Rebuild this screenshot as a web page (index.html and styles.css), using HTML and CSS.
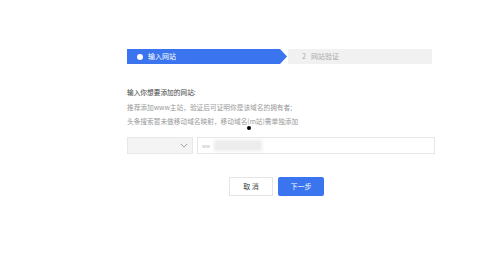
FILE: index.html
```html
<!DOCTYPE html>
<html lang="zh-CN">
<head>
    <meta charset="UTF-8">
    <meta name="viewport" content="width=device-width, initial-scale=1.0">
    <title>添加网站</title>
    <link rel="stylesheet" href="styles.css">
</head>

<body>
    <div class="wrap">
        <!-- steps -->
        <div class="steps">
            <div class="step active">
                <span class="step-num"></span>
                <span>输入网站</span>
            </div>
            <div class="step next">
                <span class="step-idx">2</span>
                <span>网站验证</span>
            </div>
        </div>

        <div class="intro">
            <p class="title">输入你想要添加的网站:</p>
            <p>推荐添加www主站，验证后可证明你是该域名的拥有者;</p>
            <p>头条搜索暂未做移动域名映射，移动域名(m站)需单独添加</p>
        </div>

        <div class="form-row">
            <div class="select">
                <svg class="chevron" viewBox="0 0 10 6" width="8" height="5">
                    <path d="M1 1l4 4 4-4" fill="none" stroke="#9a9a9a" stroke-width="1.2"/>
                </svg>
            </div>
            <div class="input">
                <span class="prefix">ww</span>
                <span class="blurred"></span>
            </div>
        </div>

        <div class="actions">
            <a href="#" class="btn btn-cancel">取 消</a>
            <a href="#" class="btn btn-primary">下一步</a>
        </div>
    </div>

    <div class="cursor-dot"></div>
</body>

</html>
```

FILE: styles.css
```css
body {
    background-color: #fff;
    color: #333;
    font-family: "Noto Sans CJK SC", "Noto Sans", sans-serif;
    margin: 0;
    width: 499px;
    height: 265px;
    overflow: hidden;
}

.wrap {
    padding: 49px 0 0 127px;
    width: 308px;
}

/* steps bar */
.steps {
    display: flex;
    width: 305px;
    height: 15px;
    font-size: 7px;
    line-height: 15px;
}

.step {
    display: flex;
    align-items: center;
}

.step.active {
    width: 160px;
    background: #3a74ee;
    color: #fff;
    clip-path: polygon(0 0, 153px 0, 160px 50%, 153px 100%, 0 100%);
    padding-left: 10px;
    box-sizing: border-box;
}

.step-num {
    width: 6px;
    height: 6px;
    border-radius: 50%;
    background: #fff;
    margin-right: 5px;
}

.step.next {
    flex: 1;
    background: #f1f1f1;
    color: #aaa;
    margin-left: 1px;
    padding-left: 14px;
}

.step-idx {
    margin-right: 5px;
}

/* intro */
.intro {
    margin-top: 21px;
    font-size: 6.7px;
    line-height: 14.5px;
    color: #999;
}

.intro p {
    margin: 0;
}

.intro .title {
    color: #444;
}

/* form */
.form-row {
    display: flex;
    gap: 4px;
    margin-top: 8px;
    height: 17px;
}

.select {
    width: 66px;
    background: #f4f4f4;
    border: 1px solid #e8e8e8;
    box-sizing: border-box;
    display: flex;
    align-items: center;
    justify-content: flex-end;
    padding-right: 4px;
}

.input {
    flex: 1;
    border: 1px solid #e6e6e6;
    box-sizing: border-box;
    display: flex;
    align-items: center;
    padding-left: 4px;
    font-size: 5px;
    color: #bbb;
}

.blurred {
    width: 48px;
    height: 11px;
    margin-left: 4px;
    background: #ececec;
    filter: blur(1.5px);
}

/* buttons */
.actions {
    display: flex;
    gap: 5px;
    margin: 23px 0 0 102px;
}

.btn {
    height: 19px;
    line-height: 19px;
    font-size: 7px;
    text-align: center;
    text-decoration: none;
    box-sizing: border-box;
}

.btn-cancel {
    width: 44px;
    border: 1px solid #e4e4e4;
    color: #444;
    line-height: 17px;
}

.btn-primary {
    width: 46px;
    background: #3a74ee;
    color: #fff;
    border-radius: 2px;
}

/* stray mouse cursor in the shot */
.cursor-dot {
    position: absolute;
    left: 247px;
    top: 126px;
    width: 4px;
    height: 4px;
    border-radius: 50%;
    background: #000;
}
```
